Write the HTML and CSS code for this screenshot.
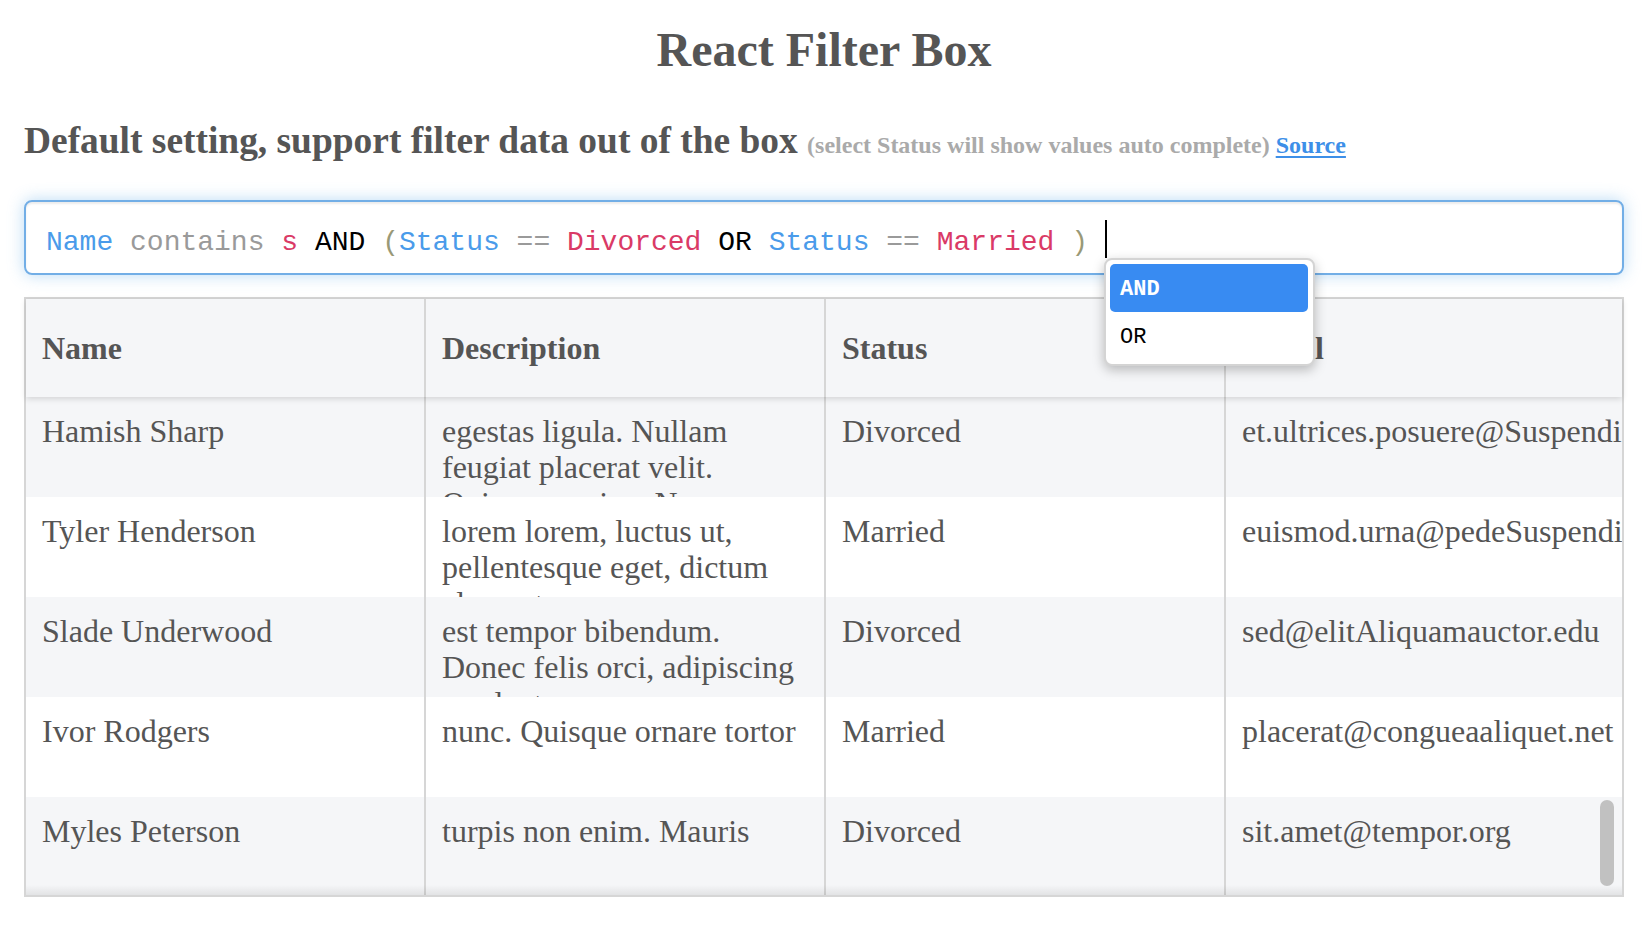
FILE: index.html
```html
<!DOCTYPE html>
<html>
<head>
<meta charset="utf-8">
<title>React Filter Box</title>
<link rel="stylesheet" href="styles.css">
</head>
<body>
<div class="page">
  <h1 class="title">React Filter Box</h1>
  <h3 class="subtitle">Default setting, support filter data out of the box <small class="hint">(select Status will show values auto complete) <a class="source" href="#">Source</a></small></h3>

  <div class="filter">
    <div class="editor"><span class="tok-field">Name</span> <span class="tok-op">contains</span> <span class="tok-val">s</span> <span class="tok-kw">AND</span> <span class="tok-br">(</span><span class="tok-field">Status</span> <span class="tok-op">==</span> <span class="tok-val">Divorced</span> <span class="tok-kw">OR</span> <span class="tok-field">Status</span> <span class="tok-op">==</span> <span class="tok-val">Married</span> <span class="tok-br">)</span> <span class="cursor"></span></div>
    <ul class="hints">
      <li class="hint-item active">AND</li>
      <li class="hint-item">OR</li>
    </ul>
  </div>

  <div class="table">
    <div class="thead">
      <div class="th">Name</div>
      <div class="th">Description</div>
      <div class="th">Status</div>
      <div class="th">Email</div>
    </div>
    <div class="tbody">
      <div class="tr odd">
        <div class="td">Hamish Sharp</div>
        <div class="td">egestas ligula. Nullam feugiat placerat velit. Quisque sapien. Nunc</div>
        <div class="td">Divorced</div>
        <div class="td nowrap">et.ultrices.posuere@Suspendisse.com</div>
      </div>
      <div class="tr">
        <div class="td">Tyler Henderson</div>
        <div class="td">lorem lorem, luctus ut, pellentesque eget, dictum elementum</div>
        <div class="td">Married</div>
        <div class="td nowrap">euismod.urna@pedeSuspendisse.net</div>
      </div>
      <div class="tr odd">
        <div class="td">Slade Underwood</div>
        <div class="td">est tempor bibendum. Donec felis orci, adipiscing nec luctus</div>
        <div class="td">Divorced</div>
        <div class="td nowrap">sed@elitAliquamauctor.edu</div>
      </div>
      <div class="tr">
        <div class="td">Ivor Rodgers</div>
        <div class="td">nunc. Quisque ornare tortor</div>
        <div class="td">Married</div>
        <div class="td nowrap">placerat@congueaaliquet.net</div>
      </div>
      <div class="tr odd">
        <div class="td">Myles Peterson</div>
        <div class="td">turpis non enim. Mauris</div>
        <div class="td">Divorced</div>
        <div class="td nowrap">sit.amet@tempor.org</div>
      </div>
    </div>
    <div class="scroll-thumb"></div>
  </div>
</div>
</body>
</html>
```

FILE: styles.css
```css
* { box-sizing: border-box; }

html, body {
  margin: 0;
  padding: 0;
  background: #ffffff;
}

body {
  font-family: "Liberation Serif", "Times New Roman", serif;
  font-size: 32px;
  color: #555555;
}

.page {
  width: 1652px;
  padding: 0 28px 0 24px;
}

.title {
  margin: 22px 0 0;
  font-size: 48px;
  line-height: 55px;
  font-weight: bold;
  text-align: center;
  color: #555555;
}

.subtitle {
  margin: 42px 0 0;
  font-size: 37.44px;
  line-height: 43px;
  font-weight: bold;
  color: #555555;
}

.hint {
  font-size: 24px;
  color: #aaaaaa;
}

.source {
  color: #3d8fe8;
  text-decoration: underline;
  text-decoration-thickness: 2px;
  text-underline-offset: 3px;
}

.filter {
  position: relative;
  margin-top: 33px;
}

.editor {
  height: 75px;
  border: 2px solid #72aee6;
  border-radius: 8px;
  padding: 22px 20px 11px;
  font-family: "Liberation Mono", "Courier New", monospace;
  font-size: 28px;
  line-height: 38px;
  white-space: pre;
  color: #000000;
  box-shadow: inset 0 2px 2px rgba(0, 0, 0, 0.075), 0 0 16px rgba(102, 175, 233, 0.45);
}

.tok-field { color: #4a9bea; }
.tok-op { color: #9a9a9a; }
.tok-val { color: #da3a66; }
.tok-kw { color: #000000; }
.tok-br { color: #999977; }

.cursor {
  display: inline-block;
  width: 2px;
  height: 38px;
  margin-top: -4px;
  background: #000000;
  vertical-align: top;
}

.hints {
  position: absolute;
  left: 1080px;
  top: 58px;
  z-index: 10;
  width: 211px;
  margin: 0;
  padding: 4px 5px 4px 4px;
  list-style: none;
  background: #ffffff;
  border: 2px solid #d4d4d4;
  border-radius: 8px;
  box-shadow: 0 4px 12px rgba(0, 0, 0, 0.25);
  font-family: "Liberation Mono", "Courier New", monospace;
  font-size: 22px;
  color: #000000;
}

.hint-item {
  height: 48px;
  padding: 4px 0 0 10px;
  line-height: 44px;
  border-radius: 5px;
}

.hint-item.active {
  background: #388bf2;
  color: #ffffff;
  font-weight: bold;
}

.table {
  position: relative;
  margin-top: 22px;
  width: 1600px;
  border: 2px solid #d6d6d6;
}

.thead {
  position: relative;
  z-index: 2;
  display: grid;
  grid-template-columns: 400px 400px 400px 1fr;
  height: 98px;
  background: #f5f6f8;
  box-shadow: 0 2px 6px rgba(0, 0, 0, 0.14);
}

.th {
  display: flex;
  align-items: center;
  padding: 0 16px;
  font-weight: bold;
  line-height: 36px;
  border-right: 2px solid #d6d6d6;
}

.th:last-child { border-right: none; }

.tbody {
  position: relative;
  height: 498px;
  overflow: hidden;
}

.tbody::after {
  content: "";
  position: absolute;
  left: 0;
  right: 0;
  bottom: 0;
  height: 10px;
  background: linear-gradient(to bottom, rgba(0, 0, 0, 0), rgba(0, 0, 0, 0.08));
}

.tr {
  display: grid;
  grid-template-columns: 400px 400px 400px 1fr;
  height: 100px;
  background: #ffffff;
}

.tr.odd { background: #f5f6f8; }

.td {
  padding: 16px 16px 0;
  line-height: 36px;
  overflow: hidden;
  border-right: 2px solid #d6d6d6;
}

.td:last-child { border-right: none; }

.td.nowrap { white-space: nowrap; }

.scroll-thumb {
  position: absolute;
  left: 1574px;
  top: 501px;
  width: 14px;
  height: 86px;
  border-radius: 7px;
  background: #c1c1c1;
  z-index: 3;
}
```
